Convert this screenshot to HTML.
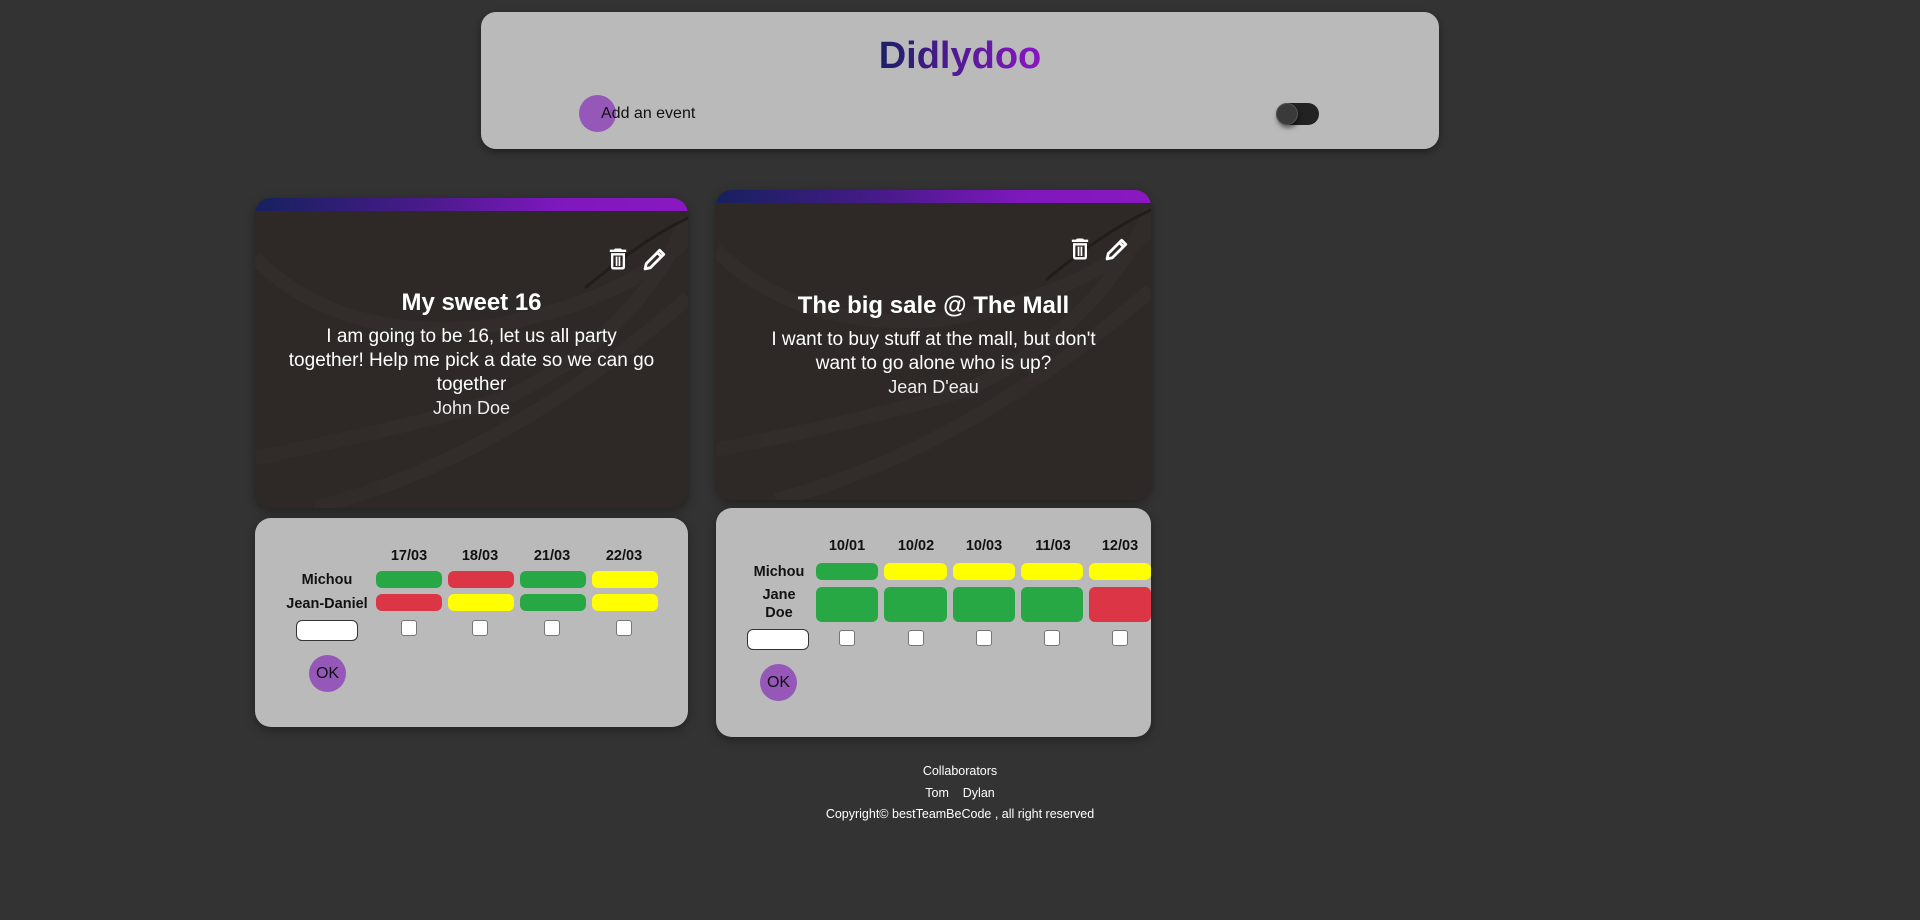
<!DOCTYPE html>
<html><head><meta charset="utf-8"><style>
*{margin:0;padding:0;box-sizing:border-box}
body{width:1920px;height:920px;background:#333333;font-family:"Liberation Sans",Arial,sans-serif;position:relative;overflow:hidden}
.abs{position:absolute}
.header{left:481px;top:12px;width:958px;height:137px;background:#bababa;border-radius:15px;box-shadow:0 3px 8px rgba(0,0,0,.4)}
.title{left:0;width:958px;top:28px;text-align:center;font-size:38px;font-weight:bold;line-height:44px}
.title span{background:linear-gradient(90deg,#1c1f66,#8a16c4);-webkit-background-clip:text;background-clip:text;color:transparent}
.card{border-radius:16px;overflow:hidden;background:#2e2926;box-shadow:0 3px 10px rgba(0,0,0,.35)}
.bar{left:0;top:0;width:100%;height:13px;background:linear-gradient(90deg,#16215e,#4a1a8c 40%,#7e18bd 70%,#8a18c0)}
.ct{color:#fff;text-align:center;width:100%;left:0;white-space:nowrap}
.tbl{background:#bababa;border-radius:16px;box-shadow:0 3px 10px rgba(0,0,0,.35)}
.d{font-weight:bold;font-size:14.5px;color:#111;text-align:center;width:70px}
.n{font-weight:bold;font-size:14.5px;color:#111;text-align:center;line-height:18px}
.b{border-radius:6px}
.g{background:#28a745}.r{background:#dc3545}.y{background:#ffff00}
.cb{width:16px;height:16px;background:#fff;border:1px solid #767676;border-radius:3px}
.inp{background:#fff;border:1px solid #333;border-radius:6px}
.ok{width:37px;height:37px;border-radius:50%;background:#9558b8;color:#111;font-size:16px;text-align:center;line-height:37px}
.f{color:#fff;font-size:12.5px;text-align:center;width:400px;left:760px}
</style></head><body>

<div class="abs header">
  <div class="abs title" style="top:22px"><span>Didlydoo</span></div>
  <div class="abs" style="left:98px;top:83px;width:37px;height:37px;border-radius:50%;background:#9558b8"></div>
  <div class="abs" style="left:120px;top:93px;font-size:16px;color:#111">Add an event</div>
  <div class="abs" style="left:795px;top:91px;width:43px;height:22px;border-radius:11px;background:#222"></div>
  <div class="abs" style="left:795px;top:91px;width:22px;height:22px;border-radius:50%;background:#3a3a3a;border:1px solid #555;box-shadow:1px 3px 4px rgba(0,0,0,.5)"></div>
</div>

<!-- card 1 -->
<div class="abs card" style="left:255px;top:198px;width:433px;height:310px">
  <svg class="abs" style="left:0;top:0" width="433" height="310"><g fill="none" stroke="#35302d" stroke-width="14" opacity=".6"><path d="M0 260 Q150 230 250 200 Q380 140 433 20"/><path d="M0 60 Q80 140 220 130 Q360 110 433 40"/><path d="M60 310 Q250 260 433 100"/></g><path d="M330 90 Q390 40 433 20" stroke="#221d1b" stroke-width="3" fill="none"/></svg>
  <div class="abs bar"></div>
  <svg class="abs" style="left:349px;top:47px" width="28" height="28" viewBox="0 0 24 24"><path fill="#fff" d="M6 19a2 2 0 0 0 2 2h8a2 2 0 0 0 2-2V7H6v12zm2-10h8v10H8V9zm7.5-5l-1-1h-5l-1 1H5v2h14V4h-3.5zM10 10h1.5v8H10zm2.5 0H14v8h-1.5z"/></svg>
  <svg class="abs" style="left:386px;top:47px" width="28" height="28" viewBox="0 0 24 24"><path fill="none" stroke="#fff" stroke-width="2.4" stroke-linejoin="round" d="M3.5 20.5l1-4.5L16 4.5l3.5 3.5L8 19.5z M14 6.5l3.5 3.5"/></svg>
  <div class="abs ct" style="top:91px;font-size:24px;font-weight:bold">My sweet 16</div>
  <div class="abs ct" style="top:127px;font-size:19px;line-height:24px">I am going to be 16, let us all party<br>together! Help me pick a date so we can go<br>together</div>
  <div class="abs ct" style="top:200px;font-size:18px;font-weight:300;color:#eee">John Doe</div>
</div>
<div class="abs tbl" style="left:255px;top:518px;width:433px;height:209px">
  <div class="abs d" style="left:119px;top:30px">17/03</div>
  <div class="abs d" style="left:190px;top:30px">18/03</div>
  <div class="abs d" style="left:262px;top:30px">21/03</div>
  <div class="abs d" style="left:334px;top:30px">22/03</div>
  <div class="abs n" style="left:22px;width:100px;top:53px">Michou</div>
  <div class="abs n" style="left:22px;width:100px;top:77px">Jean-Daniel</div>
  <div class="abs b g" style="left:121px;top:53px;width:66px;height:17px"></div>
  <div class="abs b r" style="left:193px;top:53px;width:66px;height:17px"></div>
  <div class="abs b g" style="left:265px;top:53px;width:66px;height:17px"></div>
  <div class="abs b y" style="left:337px;top:53px;width:66px;height:17px"></div>
  <div class="abs b r" style="left:121px;top:76px;width:66px;height:17px"></div>
  <div class="abs b y" style="left:193px;top:76px;width:66px;height:17px"></div>
  <div class="abs b g" style="left:265px;top:76px;width:66px;height:17px"></div>
  <div class="abs b y" style="left:337px;top:76px;width:66px;height:17px"></div>
  <div class="abs inp" style="left:41px;top:102px;width:62px;height:21px"></div>
  <div class="abs cb" style="left:146px;top:102px"></div>
  <div class="abs cb" style="left:217px;top:102px"></div>
  <div class="abs cb" style="left:289px;top:102px"></div>
  <div class="abs cb" style="left:361px;top:102px"></div>
  <div class="abs ok" style="left:54px;top:137px">OK</div>
</div>

<!-- card 2 -->
<div class="abs card" style="left:716px;top:190px;width:435px;height:310px">
  <svg class="abs" style="left:0;top:0" width="435" height="310"><g fill="none" stroke="#35302d" stroke-width="14" opacity=".6"><path d="M0 260 Q150 230 250 200 Q380 140 435 20"/><path d="M0 60 Q80 140 220 130 Q360 110 435 40"/><path d="M60 310 Q250 260 435 100"/></g><path d="M330 90 Q390 40 435 20" stroke="#221d1b" stroke-width="3" fill="none"/></svg>
  <div class="abs bar"></div>
  <svg class="abs" style="left:350px;top:45px" width="28" height="28" viewBox="0 0 24 24"><path fill="#fff" d="M6 19a2 2 0 0 0 2 2h8a2 2 0 0 0 2-2V7H6v12zm2-10h8v10H8V9zm7.5-5l-1-1h-5l-1 1H5v2h14V4h-3.5zM10 10h1.5v8H10zm2.5 0H14v8h-1.5z"/></svg>
  <svg class="abs" style="left:387px;top:45px" width="28" height="28" viewBox="0 0 24 24"><path fill="none" stroke="#fff" stroke-width="2.4" stroke-linejoin="round" d="M3.5 20.5l1-4.5L16 4.5l3.5 3.5L8 19.5z M14 6.5l3.5 3.5"/></svg>
  <div class="abs ct" style="top:102px;font-size:24px;font-weight:bold">The big sale @ The Mall</div>
  <div class="abs ct" style="top:138px;font-size:19px;line-height:24px">I want to buy stuff at the mall, but don't<br>want to go alone who is up?</div>
  <div class="abs ct" style="top:187px;font-size:18px;font-weight:300;color:#eee">Jean D'eau</div>
</div>
<div class="abs tbl" style="left:716px;top:508px;width:435px;height:229px;overflow:hidden">
  <div class="abs d" style="left:96px;top:30px">10/01</div>
  <div class="abs d" style="left:165px;top:30px">10/02</div>
  <div class="abs d" style="left:233px;top:30px">10/03</div>
  <div class="abs d" style="left:302px;top:30px">11/03</div>
  <div class="abs d" style="left:369px;top:30px">12/03</div>
  <div class="abs n" style="left:23px;width:80px;top:55px">Michou</div>
  <div class="abs n" style="left:23px;width:80px;top:78px">Jane<br>Doe</div>
  <div class="abs b g" style="left:100px;top:55px;width:62px;height:17px"></div>
  <div class="abs b y" style="left:168px;top:55px;width:63px;height:17px"></div>
  <div class="abs b y" style="left:237px;top:55px;width:62px;height:17px"></div>
  <div class="abs b y" style="left:305px;top:55px;width:62px;height:17px"></div>
  <div class="abs b y" style="left:373px;top:55px;width:62px;height:17px"></div>
  <div class="abs b g" style="left:100px;top:79px;width:62px;height:35px"></div>
  <div class="abs b g" style="left:168px;top:79px;width:63px;height:35px"></div>
  <div class="abs b g" style="left:237px;top:79px;width:62px;height:35px"></div>
  <div class="abs b g" style="left:305px;top:79px;width:62px;height:35px"></div>
  <div class="abs b r" style="left:373px;top:79px;width:62px;height:35px"></div>
  <div class="abs inp" style="left:31px;top:121px;width:62px;height:21px"></div>
  <div class="abs cb" style="left:123px;top:122px"></div>
  <div class="abs cb" style="left:192px;top:122px"></div>
  <div class="abs cb" style="left:260px;top:122px"></div>
  <div class="abs cb" style="left:328px;top:122px"></div>
  <div class="abs cb" style="left:396px;top:122px"></div>
  <div class="abs ok" style="left:44px;top:156px">OK</div>
</div>

<div class="abs f" style="top:764px">Collaborators</div>
<div class="abs f" style="top:786px">Tom &nbsp;&nbsp; Dylan</div>
<div class="abs f" style="top:807px">Copyright© bestTeamBeCode , all right reserved</div>
</body></html>
